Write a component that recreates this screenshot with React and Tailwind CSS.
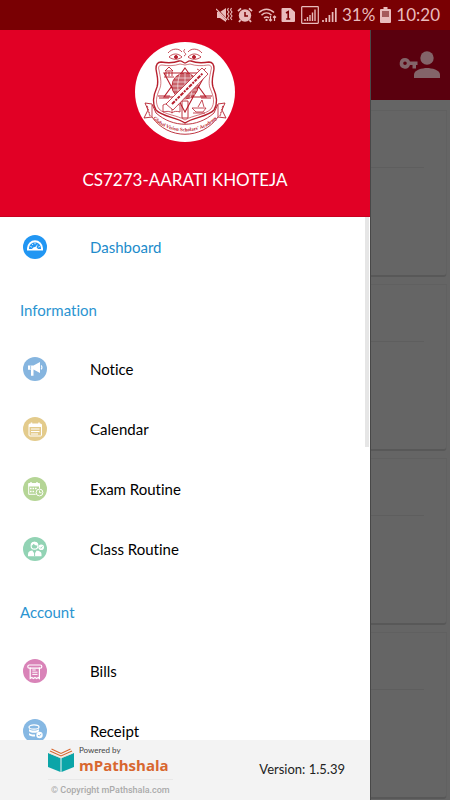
import React from "react";

const information = [
  { label: "Notice", color: "bg-[#86b5df]", icon: "notice" },
  { label: "Calendar", color: "bg-[#e3cb8c]", icon: "calendar" },
  { label: "Exam Routine", color: "bg-[#b5d596]", icon: "exam" },
  { label: "Class Routine", color: "bg-[#92d3b4]", icon: "class" },
];

const account = [
  { label: "Bills", color: "bg-[#d983b8]", icon: "bills" },
  { label: "Receipt", color: "bg-[#86b8e3]", icon: "receipt" },
];

// Glyphs are white on a 24x24 round badge
const glyphs = {
  dashboard: (
    <>
      <path d="M4 15.5v-2.2a8 8 0 0 1 16 0v2.2z" fill="white" />
      <path d="M6 14v-.8a6 6 0 0 1 12 0v.8h-3a3.2 3.2 0 0 0-6 0z" fill="#2196f3" />
      <path d="M7.4 11.5l1.4.6M9 8.8l1 1.2M12 7.5v1.7M16.8 11.5l-1.5.6" stroke="white" strokeWidth=".9" />
      <path d="M11 13.5l3.8-4.4-2 5.2z" fill="white" />
    </>
  ),
  notice: (
    <>
      <path d="M5 8.5h5.5L17 5v11l-6.5-3.5v6.2H8v-6H5z" fill="white" />
      <path d="M18 8.5c1.2.8 1.2 3 0 3.8" fill="none" stroke="white" strokeWidth="1.2" />
      <path d="M7.6 8.5v4" stroke="#86b5df" strokeWidth=".7" />
    </>
  ),
  calendar: (
    <>
      <rect x="6" y="7" width="12.5" height="12" rx="1" fill="none" stroke="white" strokeWidth="1" />
      <path d="M6 7h12.5v3H6z" fill="white" />
      <path d="M8.5 5.5V8M16 5.5V8" stroke="white" strokeWidth="1.5" />
      <path d="M8 12h8.5M8 14.5h8.5M8 17h7" stroke="white" strokeWidth="1" />
    </>
  ),
  exam: (
    <>
      <path d="M16.5 11.5v-5H5.7v10.8h7" fill="none" stroke="white" strokeWidth="1" />
      <path d="M5.5 6.5h11v3h-11z" fill="white" />
      <path d="M8 5v3M14 5v3" stroke="white" strokeWidth="1.4" />
      <path d="M7 11.5h7M7 14.5h5" stroke="white" strokeWidth="1.6" strokeDasharray="1.6 .9" />
      <circle cx="16.5" cy="15.5" r="3.4" fill="#b5d596" stroke="white" strokeWidth="1" />
      <path d="M16.5 13.5v2.2h2" fill="none" stroke="white" strokeWidth=".9" />
    </>
  ),
  class: (
    <>
      <circle cx="11.5" cy="8.7" r="3.4" fill="none" stroke="white" strokeWidth="1.1" />
      <path d="M8 8.5c0-5 7-5 7 0-2 0-3.5-.5-4.5-1.8C10 8 9 8.5 8 8.5z" fill="white" />
      <path d="M5 19.2v-2c0-2.7 2-3.3 4.3-3.7l2.2 3.2 2.2-3.2c2.3.4 4.8 1 4.8 3.7v2z" fill="white" />
      <path d="M11.6 14.5v4.7" stroke="#92d3b4" strokeWidth="1" />
      <circle cx="18.2" cy="10.3" r="2.8" fill="white" />
      <path d="M16.8 10.3l1 1 1.7-2" fill="none" stroke="#92d3b4" strokeWidth=".8" />
    </>
  ),
  bills: (
    <>
      <rect x="4.8" y="6" width="14" height="3.2" rx="1.5" fill="none" stroke="white" strokeWidth="1.2" />
      <path d="M7.2 8.5v11l1.6-1 1.6 1 1.6-1 1.6 1 1.6-1 1.2 1v-11" fill="none" stroke="white" strokeWidth="1.2" />
      <path d="M9.3 11h3.4M9.3 13.2h5.2M9.3 15.4h5.2" stroke="white" strokeWidth="1" />
    </>
  ),
  receipt: (
    <>
      <ellipse cx="11" cy="8" rx="5" ry="2.2" fill="none" stroke="white" strokeWidth="1.2" />
      <path d="M6 9.5c0 2.8 10 2.8 10 0v2.2c0 2.8-10 2.8-10 0z" fill="white" />
      <path d="M6 13.5c0 1.6 3 2.1 6 2v2c-3 0-6-.4-6-2z" fill="white" />
      <circle cx="16.5" cy="16" r="3.2" fill="white" />
      <path d="M15 16l1.2 1.2 2-2.3" fill="none" stroke="#86b8e3" strokeWidth=".9" />
    </>
  ),
};

const MenuItem = ({ label, color, icon, active }) => (
  <li>
    <a href="#" className="flex items-center h-15 pl-[23px]">
      <span className={`w-6 h-6 rounded-full shrink-0 ${color}`}>
        <svg viewBox="0 0 24 24" className="w-6 h-6">
          {glyphs[icon]}
        </svg>
      </span>
      <span
        className={
          active
            ? "ml-[43px] text-[15px] text-[#218bcb]"
            : "ml-[43px] text-[15px] text-black"
        }
      >
        {label}
      </span>
    </a>
  </li>
);

const MenuSection = ({ title, items }) => (
  <section>
    <h2 className="h-[62px] flex items-center pt-1 pl-5 text-[15px] text-[#2b94d1]">
      {title}
    </h2>
    <ul>
      {items.map((item) => (
        <MenuItem key={item.label} {...item} />
      ))}
    </ul>
  </section>
);

const StatusBar = () => (
  <div className="h-[30px] shrink-0 bg-[#790003] text-[#e9bcbc] flex items-center justify-end pr-[10px]">
    {/* muted with vibration */}
    <svg viewBox="0 0 17 16" className="w-[17px] h-4 mr-1" fill="currentColor">
      <path d="M1 5h3l6-4v14l-6-4H1z" />
      <path d="M1 2l10 11" stroke="#790003" strokeWidth="1.6" />
      <path d="M0 2l11 11" stroke="currentColor" strokeWidth="1.2" />
      <path d="M12.5 1l-1 2 1.5 2-1.5 2 1.5 2-1.5 2 1.5 2M15.5 1l-1 2 1.5 2-1.5 2 1.5 2-1.5 2 1.5 2" fill="none" stroke="currentColor" strokeWidth="1.1" />
    </svg>
    <svg viewBox="0 0 16 16" className="w-4 h-4 mr-[5px]" fill="currentColor">
      <circle cx="8" cy="8.5" r="6.2" />
      <path d="M1 4.2l3-2.8M15 4.2l-3-2.8M3.5 13L2 15M12.5 13l1.5 2" stroke="currentColor" strokeWidth="1.8" />
      <path d="M8 5v4h3" fill="none" stroke="#790003" strokeWidth="1.5" />
    </svg>
    <svg viewBox="0 0 19 16" className="w-[19px] h-4 mr-1" fill="none" stroke="currentColor" strokeWidth="1.5">
      <path d="M1 5.5c4.5-4.5 10.5-4.5 15 0M3.5 8.3c3-3 7-3 10 0M6 11c1.5-1.5 3.5-1.5 5 0" />
      <path d="M8.5 12v2" strokeWidth="2" />
      <path d="M12.5 9v5M11 12.5l1.5 1.5 1.5-1.5M16.5 14V9M15 10.5L16.5 9l1.5 1.5" strokeWidth="1.2" />
    </svg>
    <svg viewBox="0 0 14 16" className="w-[14px] h-4 mr-[6px]">
      <path d="M1.5 1h8L14 5v9a1 1 0 0 1-1 1H1.5a1 1 0 0 1-1-1V2a1 1 0 0 1 1-1z" fill="currentColor" />
      <path d="M5 6l2.2-1.3V12M5.2 12h4" fill="none" stroke="#790003" strokeWidth="1.6" />
    </svg>
    <svg viewBox="0 0 18 18" className="w-[18px] h-[18px] mr-[3px]" fill="none" stroke="currentColor">
      <rect x=".7" y=".7" width="16.6" height="16.6" rx=".5" strokeWidth="1.2" />
      <path d="M4 15v-2M6.5 15v-4M9 15V9M11.5 15V6.5M14 15V3.5" strokeWidth="1.4" />
    </svg>
    <svg viewBox="0 0 15 16" className="w-[15px] h-4 mr-[5px]" fill="none" stroke="currentColor" strokeWidth="1.7">
      <path d="M1 15v-2M4.2 15v-4M7.4 15V8M10.6 15V5M13.8 15V1" />
    </svg>
    <span className="text-[17px] leading-5">31%</span>
    <svg viewBox="0 0 11 16" className="w-[11px] h-4 mx-[5px]">
      <path d="M3.5 0h4v2H10a1 1 0 0 1 1 1v12a1 1 0 0 1-1 1H1a1 1 0 0 1-1-1V3a1 1 0 0 1 1-1h2.5z" fill="currentColor" />
      <path d="M2 4h7v6H2z" fill="#a65a5b" />
    </svg>
    <span className="text-[17px] leading-5">10:20</span>
  </div>
);

const SchoolLogo = () => (
  <svg
    viewBox="0 0 100 100"
    className="w-25 h-25 rounded-full bg-white"
    fill="none"
    stroke="#b7202e"
    role="img"
    aria-label="Global Vision Scholars' Academy"
  >
    {/* eyes */}
    <path d="M33 11c4-5 11-5 14-1M67 11c-4-5-11-5-14-1M34 15c4-4 9-4 13 0-4 3-9 3-13 0zM66 15c-4-4-9-4-13 0 4 3 9 3 13 0z" strokeWidth=".8" />
    <circle cx="41" cy="15" r="1.5" fill="#b7202e" />
    <circle cx="59" cy="15" r="1.5" fill="#b7202e" />
    <path d="M50 7c-2 2-1 3 0 4s1 2-1 3" strokeWidth=".8" />
    {/* shield */}
    <path d="M26 20c6 1 13 1 18-1 3-1 4 2 6 2s3-3 6-2c5 2 12 2 18 1 4 0 5 3 5 7-1 7-3 12-1 18 4 9 5 17 1 23-6 7-21 7-29 13-8-6-23-6-29-13-4-6-3-14 1-23 2-6 0-11-1-18 0-4 1-7 5-7z" strokeWidth="1.4" />
    <path d="M27 23c6 1 12 1 18-1 2 0 3 1 5 1s3-1 5-1c6 2 12 2 18 1 3 0 4 2 3 5-1 6-3 12-1 18 4 9 5 15 1 21-6 6-18 6-26 11-8-5-20-5-26-11-4-6-3-12 1-21 2-6 0-12-1-18-1-3 0-5 3-5z" strokeWidth=".6" />
    {/* star and globe */}
    <path d="M29 31h42L50 70zM50 26l21 29H29z" strokeWidth="1.1" />
    <path d="M47 59h6v17h-6z" strokeWidth=".9" />
    <circle cx="50" cy="44" r="13" fill="#c8636b" strokeWidth=".8" />
    <path d="M38 40h24M37 44h26M38 48h24M40 52h20M40 36h20M50 31v26M45 32c-3 8-3 16 0 24M55 32c3 8 3 16 0 24" stroke="white" strokeWidth=".6" />
    {/* temple, tools, book and lamp */}
    <path d="M30 29l4-4 4 4zM31 30v4M34 30v4M37 30v4M29 35h10" strokeWidth=".9" />
    <path d="M62 27l9 5M64 33l7-7M63 30h8" strokeWidth=".8" />
    <path d="M28 63c4-2 7-1 9 1 2-2 5-2 8-1v7c-3-1-6-1-8 1-2-2-5-2-9-1zM37 64v7M57 66h14l-3 4h-7zM63 65l4-7 2 7M58 71h12" strokeWidth=".8" />
    <path d="M23 54h12M24 56h10M65 54h12M66 56h10" strokeWidth="1.1" />
    {/* diagonal band */}
    <path d="M31 62l36-36 6 6-35 36z" fill="white" strokeWidth=".8" />
    <path d="M37 62l31-31" strokeWidth="2" strokeDasharray="4 1 2 1 3 1" />
    {/* ribbon */}
    <path d="M10 61l7 1 4 9c17 15 41 15 58 0l4-9 7-1-3 7 4 8-8-1C67 98 33 98 17 75l-8 1 4-8z" fill="white" strokeWidth=".9" />
    <path d="M17 63v12M83 63v12" strokeWidth=".8" />
    <path d="M12 64l3 10M88 64l-3 10" strokeWidth="1.3" strokeDasharray="1 .6" />
    <path id="ribbon-arc" d="M16 74C32 94.500 68 94.500 84 74" stroke="none" />
    <text fontSize="5" fontWeight="700" fill="#b7202e" stroke="none" textAnchor="middle" className="font-['Liberation_Serif',serif]">
      <textPath href="#ribbon-arc" startOffset="50%">
        Global Vision Scholars' Academy
      </textPath>
    </text>
  </svg>
);

const BookLogo = () => (
  <svg viewBox="0 0 26 24" className="w-[26px] h-6 shrink-0">
    <path d="M0 5l12.5 5v14L0 19zM26 5l-12.5 5v14L26 19z" fill="#0ba5a8" />
    <path d="M2 3l11 5 11-5M3.5 1L13 5.5 22.5 1" fill="none" stroke="#d8672f" strokeWidth="1.1" />
    <path d="M1 5l12 5 12-5" fill="none" stroke="#f6d9c9" strokeWidth=".8" />
  </svg>
);

const Card = () => (
  <div className="h-[167px] shrink-0 mr-[3px] border-t border-t-[#606060] border-r border-r-[#616161] border-b-2 border-b-[#585858] rounded-br-sm">
    <div className="h-[57px] mr-[22px] border-b border-[#5e5e5e]"></div>
  </div>
);

const App = () => {
  return (
    <div className="h-screen flex flex-col overflow-hidden font-[Lato,sans-serif] [font-variant-ligatures:none]">
      <StatusBar />
      <div className="flex flex-1 min-h-0">
        <aside className="flex-1 min-w-0 flex flex-col bg-white">
          <header className="shrink-0 flex flex-col items-center pt-3 pb-6 bg-[#e10025] border-b border-[#c80020]">
            <SchoolLogo />
            <h1 className="mt-[26px] text-[17px] leading-6 text-white">
              CS7273-AARATI KHOTEJA
            </h1>
          </header>

          <div className="relative flex-1 min-h-0">
            <nav className="h-full overflow-y-auto [scrollbar-width:none]">
              <ul>
                <MenuItem
                  label="Dashboard"
                  color="bg-[#2196f3]"
                  icon="dashboard"
                  active
                />
              </ul>
              <MenuSection title="Information" items={information} />
              <MenuSection title="Account" items={account} />
            </nav>
            <div className="absolute top-0 right-px w-1 h-[230px] bg-[#e6e6e6]"></div>
          </div>

          <footer className="h-15 shrink-0 flex items-center justify-between pl-12 pr-[25px] bg-[#f3f3f3]">
            <div>
              <div className="flex items-center gap-[5px] pb-1 border-b border-[#e8e8e8]">
                <BookLogo />
                <div className="pr-1">
                  <p className="text-[8px] leading-[10px] text-[#444]">
                    Powered by
                  </p>
                  <p className="font-['Open_Sans',sans-serif] font-bold text-[15px] leading-5 text-[#d8672f]">
                    mPathshala
                  </p>
                </div>
              </div>
              <p className="mt-1 pl-[3px] font-[Roboto,sans-serif] font-medium text-[9px] leading-3 text-[#aaa]">
                © Copyright mPathshala.com
              </p>
            </div>
            <p className="text-[13px] text-[#222]">Version: 1.5.39</p>
          </footer>
        </aside>

        <main className="w-20 shrink-0 flex flex-col bg-[#656565] border-l border-[#484848] overflow-hidden">
          <div className="h-[70px] shrink-0 flex items-center justify-end pr-[9px] bg-[#5a000e]">
            <button type="button" aria-label="Switch user">
              <svg viewBox="0 0 42 28" className="w-[42px] h-7" fill="#836469">
                <circle cx="28" cy="7" r="6.7" />
                <path d="M15 27v-3.5c0-4.5 8.5-6.5 13-6.5s13 2 13 6.5V27z" />
                <path
                  d="M6 7a5.300 5.300 0 1 0 5 7h2.500v3.500H17V14h1.500v-3.500H11A5.300 5.300 0 0 0 6 7zm0 3.500a1.800 1.800 0 1 1 0 3.600 1.800 1.800 0 0 1 0-3.600z"
                  fillRule="evenodd"
                />
              </svg>
            </button>
          </div>
          <div className="flex flex-col gap-[7px] pt-[10px]">
            <Card />
            <Card />
            <Card />
            <Card />
          </div>
        </main>
      </div>
    </div>
  );
};

export default App;
